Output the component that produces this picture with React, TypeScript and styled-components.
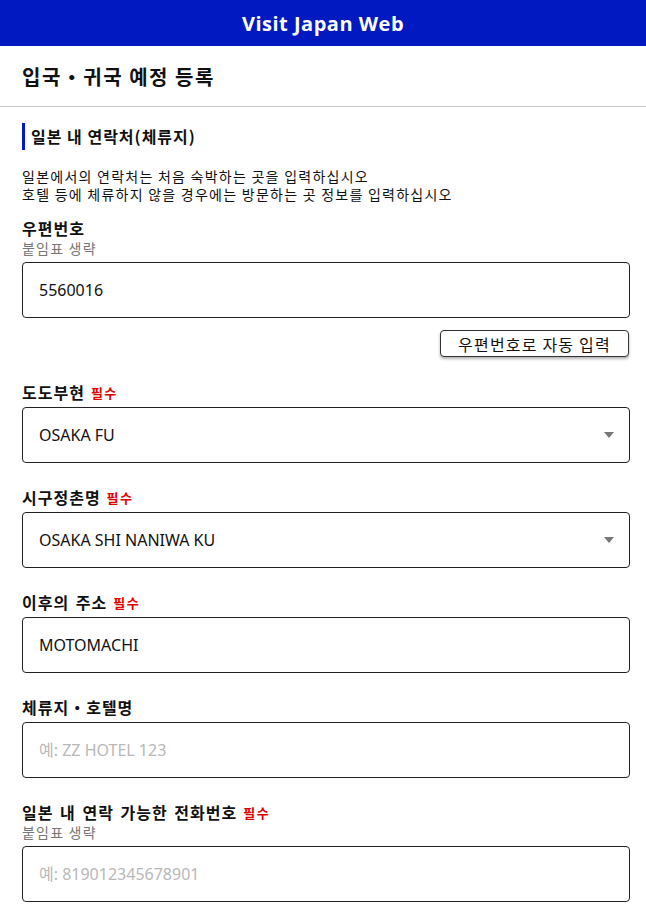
import React from "react";
import styled, { createGlobalStyle } from "styled-components";

const Global = createGlobalStyle`
  html, body { margin: 0; padding: 0; background: #fff; }
  body { font-family: "Noto Sans CJK KR", "Noto Sans", sans-serif; color: #111; }
  * { box-sizing: border-box; }
`;

const Header = styled.header`
  height: 46px;
  background: #0019c0;
  display: flex;
  align-items: center;
  justify-content: center;
  color: #fff;
  font-family: "Open Sans", "Noto Sans", sans-serif;
  font-weight: 700;
  font-size: 20px;
  letter-spacing: 0.5px;
`;

const PageTitle = styled.h1`
  margin: 0;
  padding: 15px 22px 14px;
  font-size: 20px;
  line-height: 31px;
  font-weight: 700;
  letter-spacing: 1.5px;
  border-bottom: 1px solid #c8c8c8;
`;

const Content = styled.main`
  padding: 16px 16px 24px 22px;
  display: flex;
  flex-direction: column;
`;

const SectionTitle = styled.h2`
  margin: 0;
  border-left: 3px solid #0019c0;
  padding-left: 6px;
  font-size: 16px;
  line-height: 27px;
  font-weight: 700;
  letter-spacing: 1px;
`;

const Description = styled.div`
  margin-top: 17px;
  display: flex;
  flex-direction: column;
`;

const DescLine = styled.p`
  margin: 0;
  height: 18px;
  font-size: 14px;
  line-height: 18px;
  letter-spacing: 1.25px;
`;

const Field = styled.div<{ $gap?: number }>`
  display: flex;
  flex-direction: column;
  margin-top: ${(p) => p.$gap ?? 23}px;
`;

const Label = styled.div`
  height: 22px;
  font-size: 16px;
  font-weight: 700;
  line-height: 22px;
  letter-spacing: 1px;
  word-spacing: 2px;
  display: flex;
  align-items: center;
  gap: 6px;
`;

const Required = styled.span`
  color: #e00000;
  font-size: 13px;
  font-weight: 700;
  line-height: 22px;
  letter-spacing: 1.5px;
  padding-top: 1px;
`;

const Hint = styled.div`
  font-size: 14px;
  line-height: 18px;
  letter-spacing: 1.2px;
  color: #777;
  margin-bottom: 1px;
`;

const InputBox = styled.div`
  position: relative;
  margin-top: 4px;
`;

const TextInput = styled.input`
  display: block;
  width: 100%;
  height: 56px;
  border: 1px solid #222;
  border-radius: 4px;
  padding: 0 16px;
  font-family: "Noto Sans", "Noto Sans CJK KR", sans-serif;
  font-size: 16px;
  color: #111;
  background: #fff;
  outline: none;
  &::placeholder { color: #b8b8b8; }
`;

const Caret = styled.svg`
  position: absolute;
  right: 16px;
  top: 50%;
  transform: translateY(-50%);
  pointer-events: none;
`;

const ButtonRow = styled.div`
  display: flex;
  justify-content: flex-end;
  margin-top: 12px;
`;

const AutoButton = styled.button`
  height: 27px;
  width: 189px;
  margin-right: 1px;
  border: 1px solid #333;
  border-radius: 4px;
  background: #fff;
  box-shadow: 0 2px 3px rgba(0, 0, 0, 0.3);
  font-family: "Noto Sans CJK KR", sans-serif;
  font-size: 16px;
  letter-spacing: 1.2px;
  line-height: 1;
  color: #111;
  padding: 0;
`;

function Input({ value, placeholder, select }: { value?: string; placeholder?: string; select?: boolean }) {
  return (
    <InputBox>
      <TextInput readOnly value={value ?? ""} placeholder={placeholder} />
      {select && (
        <Caret width="10" height="6" viewBox="0 0 10 6">
          <path d="M0 0 L10 0 L5 6 Z" fill="#777" />
        </Caret>
      )}
    </InputBox>
  );
}

export default function App() {
  return (
    <>
      <Global />
      <Header>Visit Japan Web</Header>
      <PageTitle>입국・귀국 예정 등록</PageTitle>
      <Content>
        <SectionTitle>일본 내 연락처(체류지)</SectionTitle>
        <Description>
          <DescLine>일본에서의 연락처는 처음 숙박하는 곳을 입력하십시오</DescLine>
          <DescLine>호텔 등에 체류하지 않을 경우에는 방문하는 곳 정보를 입력하십시오</DescLine>
        </Description>
        <Field $gap={14}>
          <Label>우편번호</Label>
          <Hint>붙임표 생략</Hint>
          <Input value="5560016" />
        </Field>
        <ButtonRow>
          <AutoButton>우편번호로 자동 입력</AutoButton>
        </ButtonRow>
        <Field $gap={24}>
          <Label>
            도도부현<Required>필수</Required>
          </Label>
          <Input value="OSAKA FU" select />
        </Field>
        <Field>
          <Label>
            시구정촌명<Required>필수</Required>
          </Label>
          <Input value="OSAKA SHI NANIWA KU" select />
        </Field>
        <Field>
          <Label>
            이후의 주소<Required>필수</Required>
          </Label>
          <Input value="MOTOMACHI" />
        </Field>
        <Field>
          <Label>체류지・호텔명</Label>
          <Input placeholder="예: ZZ HOTEL 123" />
        </Field>
        <Field>
          <Label>
            일본 내 연락 가능한 전화번호<Required>필수</Required>
          </Label>
          <Hint>붙임표 생략</Hint>
          <Input placeholder="예: 819012345678901" />
        </Field>
      </Content>
    </>
  );
}
